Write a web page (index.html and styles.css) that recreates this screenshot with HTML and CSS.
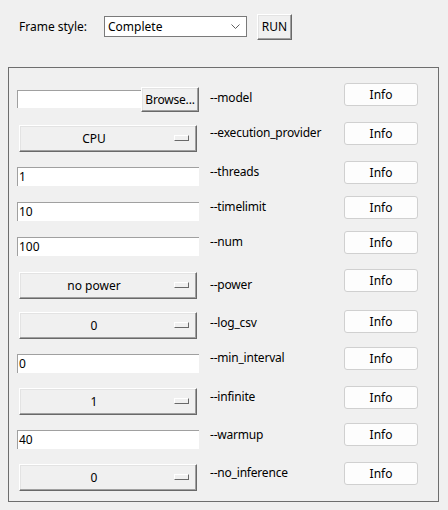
FILE: index.html
```html
<!DOCTYPE html>
<html>
<head>
<meta charset="utf-8">
<link rel="stylesheet" href="styles.css">
</head>
<body>
<div class="top">
  <span class="top-label">Frame style:</span>
  <div class="combo">
    <span>Complete</span>
    <svg class="chev" width="9" height="5" viewBox="0 0 9 5"><path d="M0.5 0.5 L4.5 4.5 L8.5 0.5" fill="none" stroke="#606060" stroke-width="1"/></svg>
  </div>
  <div class="run">RUN</div>
</div>
<div class="frame">
  <div class="grid">
    <div class="cell browse-cell">
      <div class="entry short"></div>
      <div class="tkbtn browse">Browse...</div>
    </div>
    <div class="lbl low4">--model</div>
    <div class="info">Info</div>

    <div class="cell"><div class="opt">CPU<span class="ind"></span></div></div>
    <div class="lbl">--execution_provider</div>
    <div class="info">Info</div>

    <div class="cell"><div class="entry">1</div></div>
    <div class="lbl">--threads</div>
    <div class="info">Info</div>

    <div class="cell"><div class="entry">10</div></div>
    <div class="lbl">--timelimit</div>
    <div class="info">Info</div>

    <div class="cell"><div class="entry">100</div></div>
    <div class="lbl">--num</div>
    <div class="info">Info</div>

    <div class="cell"><div class="opt">no power<span class="ind"></span></div></div>
    <div class="lbl low5">--power</div>
    <div class="info">Info</div>

    <div class="cell"><div class="opt up1">0<span class="ind"></span></div></div>
    <div class="lbl low2">--log_csv</div>
    <div class="info">Info</div>

    <div class="cell"><div class="entry down1">0</div></div>
    <div class="lbl">--min_interval</div>
    <div class="info">Info</div>

    <div class="cell"><div class="opt up1">1<span class="ind"></span></div></div>
    <div class="lbl">--infinite</div>
    <div class="info">Info</div>

    <div class="cell"><div class="entry down1">40</div></div>
    <div class="lbl low1">--warmup</div>
    <div class="info">Info</div>

    <div class="cell"><div class="opt up1">0<span class="ind"></span></div></div>
    <div class="lbl">--no_inference</div>
    <div class="info">Info</div>
  </div>
</div>
</body>
</html>
```
FILE: styles.css
```css
* { box-sizing: border-box; }
html, body { margin: 0; padding: 0; background: #f0f0f0; }
body {
  width: 448px; height: 510px; overflow: hidden;
  font-family: "Noto Sans", "Open Sans", sans-serif;
  font-size: 12px; color: #000;
}
.top {
  display: flex; align-items: center;
  height: 53px; padding-left: 19px;
}
.top-label { width: 85px; }
.combo {
  width: 143px; height: 21px;
  background: #fff; border: 1px solid #7a7a7a;
  display: flex; align-items: center; justify-content: space-between;
  padding: 0 6px 0 3px;
}
.chev { display: block; }
.run {
  margin-left: 10px; width: 35px; height: 26px;
  display: flex; align-items: center; justify-content: center;
  background: #f0f0f0;
  border-top: 1px solid #fff; border-left: 1px solid #fff;
  border-right: 1px solid #696969; border-bottom: 1px solid #696969;
  box-shadow: inset -1px -1px 0 #a0a0a0, inset 1px 1px 0 #e3e3e3;
}
.frame {
  margin: 14px 0 0 8px;
  width: 431px; height: 435px;
  border: 1px solid #6e6e6e;
  padding: 15px 0 0 8px;
}
.grid {
  display: grid;
  grid-template-columns: 193px 134px 74px;
  grid-template-rows: 39px 39px 35px 35px 38px 41px 37px 39px 37px 39px 23px;
}
.cell { display: flex; align-items: flex-start; width: 182px; }
.entry {
  width: 182px; height: 19px; margin-top: 6px;
  background: #fff;
  border-top: 1px solid #a0a0a0; border-left: 1px solid #a0a0a0;
  padding-left: 1px; line-height: 18px;
}
.entry.short { width: 124px; height: 18px; margin-top: 7px; }
.down1 { margin-top: 7px; }
.tkbtn {
  background: #f0f0f0;
  border-top: 1px solid #fff; border-left: 1px solid #fff;
  border-right: 1px solid #696969; border-bottom: 1px solid #696969;
  box-shadow: inset -1px -1px 0 #a0a0a0, inset 1px 1px 0 #e3e3e3;
  display: flex; align-items: center; justify-content: center;
}
.browse { width: 58px; height: 25px; margin-top: 4px; letter-spacing: -0.2px; }
.opt {
  position: relative;
  width: 178px; height: 27px; margin: 3px 0 0 2px;
  background: #f0f0f0;
  border-top: 1px solid #fff; border-left: 1px solid #fff;
  border-right: 1px solid #696969; border-bottom: 1px solid #696969;
  box-shadow: inset -1px -1px 0 #a0a0a0, inset 1px 1px 0 #e3e3e3;
  display: flex; align-items: center; justify-content: center;
  padding-right: 28px;
}
.opt.up1 { margin-top: 2px; }
.ind {
  position: absolute; right: 7px; top: 9px;
  width: 15px; height: 6px;
  background: #f0f0f0;
  border-top: 1px solid #fff; border-left: 1px solid #fff;
  border-right: 1px solid #696969; border-bottom: 1px solid #696969;
}
.lbl { line-height: 22px; white-space: nowrap; letter-spacing: -0.2px; }
.low1 { margin-top: 1px; }
.low2 { margin-top: 2px; }
.low4 { margin-top: 4px; }
.low5 { margin-top: 5px; }
.info {
  width: 74px; height: 23px;
  background: #fdfdfd;
  border: 1px solid #d0d0d0; border-radius: 3px;
  display: flex; align-items: center; justify-content: center;
}
```
